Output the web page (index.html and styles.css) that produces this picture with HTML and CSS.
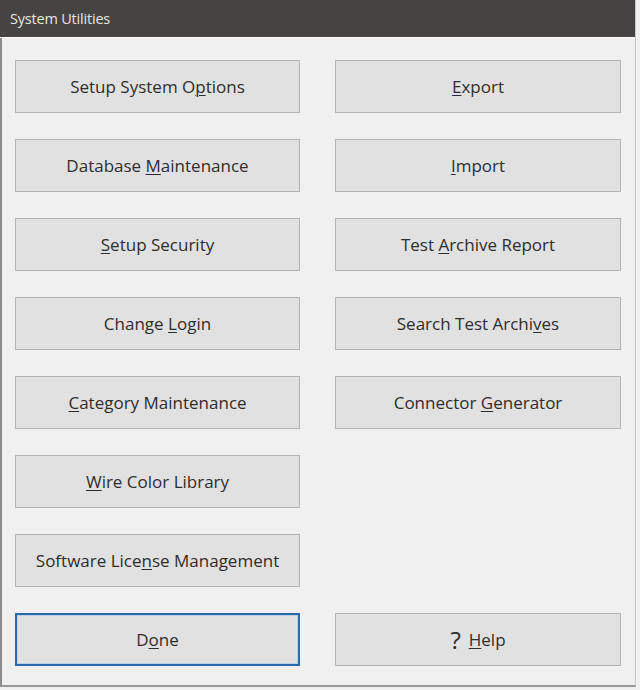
FILE: index.html
```html
<!DOCTYPE html>
<html>
<head>
<meta charset="utf-8">
<link rel="stylesheet" href="styles.css">
</head>
<body>
<div class="window">
  <div class="titlebar">System Utilities</div>
  <div class="content">
    <div class="grid">
      <div class="btn"><span>Setup System O<u>p</u>tions</span></div>
      <div class="btn"><span><u>E</u>xport</span></div>
      <div class="btn"><span>Database <u>M</u>aintenance</span></div>
      <div class="btn"><span><u>I</u>mport</span></div>
      <div class="btn"><span><u>S</u>etup Security</span></div>
      <div class="btn"><span>Test <u>A</u>rchive Report</span></div>
      <div class="btn"><span>Change <u>L</u>ogin</span></div>
      <div class="btn"><span>Search Test Archi<u>v</u>es</span></div>
      <div class="btn"><span><u>C</u>ategory Maintenance</span></div>
      <div class="btn"><span>Connector <u>G</u>enerator</span></div>
      <div class="btn"><span><u>W</u>ire Color Library</span></div>
      <div class="empty"></div>
      <div class="btn"><span>Software Lice<u>n</u>se Management</span></div>
      <div class="empty"></div>
    </div>
    <div class="grid bottom">
      <div class="btn default"><span>D<u>o</u>ne</span></div>
      <div class="btn"><span class="q">?</span><span><u>H</u>elp</span></div>
    </div>
  </div>
</div>
</body>
</html>
```
FILE: styles.css
```css
html, body {
  margin: 0;
  padding: 0;
  background: #f0f0f0;
}
body {
  width: 640px;
  height: 690px;
  overflow: hidden;
  font-family: "Open Sans", "Noto Sans", sans-serif;
}
.window {
  width: 636px;
  height: 687px;
  box-sizing: border-box;
  border-left: 2px solid #8c8c8c;
  border-right: 1px solid #c8c8c8;
  border-bottom: 2px solid #9a9a9a;
  background: #f0f0f0;
  display: flex;
  flex-direction: column;
}
.titlebar {
  height: 37px;
  background: #454442;
  color: #e4e4e4;
  font-size: 14.5px;
  line-height: 37px;
  padding-left: 10px;
  border-bottom: 1px solid #fafafa;
  margin-left: -2px;
  letter-spacing: -0.2px;
}
.content {
  padding: 22px 0 0 13px;
}
.grid {
  display: grid;
  grid-template-columns: 285px 286px;
  column-gap: 35px;
  row-gap: 26px;
  grid-auto-rows: 53px;
}
.bottom {
  margin-top: 26px;
}
.btn {
  box-sizing: border-box;
  background: #e1e1e1;
  border: 1px solid #b4b4b4;
  color: #2e2e2e;
  font-size: 17px;
  display: flex;
  align-items: center;
  justify-content: center;
  white-space: pre;
}
.btn u {
  text-decoration-thickness: 1px;
  text-underline-offset: 2px;
}
.btn.default {
  border: 2px solid #2b6aa8;
  box-shadow: inset 0 0 0 1px #bcd0e6;
}
.q {
  font-size: 24px;
  margin-right: 8px;
  line-height: 1;
}
```
